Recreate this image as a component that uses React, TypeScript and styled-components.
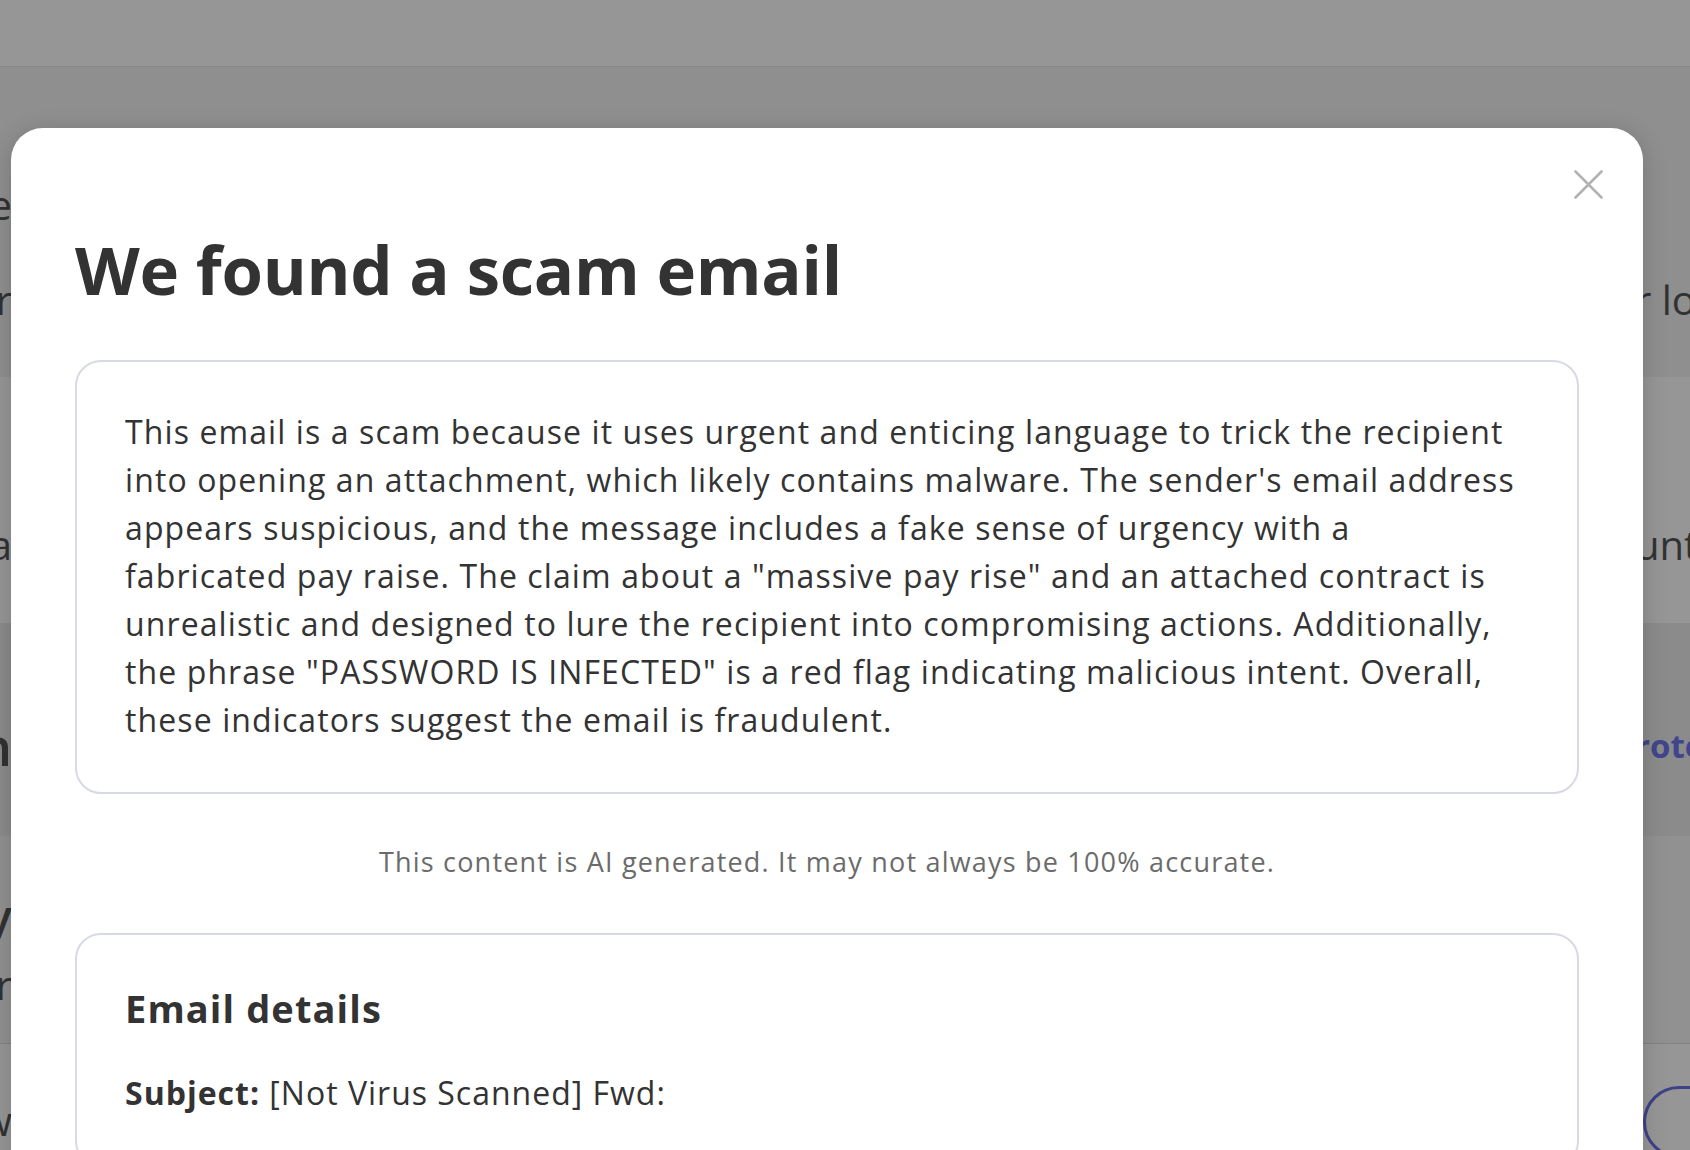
import React from 'react';
import styled, { createGlobalStyle } from 'styled-components';

const GlobalStyle = createGlobalStyle`
    html, body {
        margin: 0;
        padding: 0;
    }
    body {
        font-family: 'Open Sans', 'Liberation Sans', sans-serif;
        background: #ffffff;
        overflow: hidden;
    }
`;

// ---- page behind the dialog ----

const Page = styled.div`
    position: relative;
    width: 1690px;
    height: 1150px;
    overflow: hidden;
    background: #f3f3f3;
    display: flex;
    flex-direction: column;
`;

const TopBar = styled.header`
    height: 66px;
    flex: none;
    background: #ffffff;
    border-bottom: 1px solid #e2e2e2;
`;

interface BandProps {
    $tone: string;
    $height: number;
    $padTop: number;
    $gap?: number;
}

const Band = styled.section<BandProps>`
    height: ${props => props.$height}px;
    flex: none;
    box-sizing: border-box;
    padding-top: ${props => props.$padTop}px;
    background: ${props => props.$tone};
    display: flex;
    flex-direction: column;
    gap: ${props => props.$gap || 0}px;
    overflow: hidden;
`;

interface BgRowProps {
    $size: number;
    $weight?: number;
}

const BgRow = styled.div<BgRowProps>`
    display: flex;
    justify-content: space-between;
    align-items: center;
    white-space: nowrap;
    font-size: ${props => props.$size}px;
    line-height: ${props => Math.round(props.$size * 1.35)}px;
    font-weight: ${props => props.$weight || 400};
    color: #555555;
`;

// shows only the tail of a line that runs under the dialog
const LeftTail = styled.span`
    flex: none;
    width: 12px;
    display: flex;
    justify-content: flex-end;
    overflow: hidden;
`;

interface RightHeadProps {
    $accent?: boolean;
}

const RightHead = styled.span<RightHeadProps>`
    flex: none;
    width: 55px;
    overflow: hidden;
    font-size: ${props => (props.$accent ? '33px' : 'inherit')};
    font-weight: ${props => (props.$accent ? 700 : 'inherit')};
    color: ${props => (props.$accent ? '#6f75ee' : 'inherit')};
`;

const BottomArea = styled.div`
    flex: 1;
    border-top: 1px solid #dcdcdc;
    background: #ffffff;
    display: flex;
    justify-content: space-between;
    align-items: flex-start;
    padding-top: 42px;
`;

const BottomText = styled.span`
    font-size: 40px;
    line-height: 54px;
    color: #555555;
    margin-top: 8px;
`;

const GhostButton = styled.div`
    width: 240px;
    height: 72px;
    flex: none;
    box-sizing: border-box;
    border: 3px solid #6a70e6;
    border-radius: 38px;
    margin-right: -193px;
`;

const Overlay = styled.div`
    position: absolute;
    inset: 0;
    background: rgba(0, 0, 0, 0.41);
`;

// ---- dialog ----

const Dialog = styled.div`
    position: absolute;
    left: 11px;
    top: 128px;
    width: 1632px;
    min-height: 1100px;
    box-sizing: border-box;
    padding: 101px 64px 0;
    background: #ffffff;
    border-radius: 32px;
    box-shadow: 0 4px 24px rgba(0, 0, 0, 0.18);
    color: #333333;
`;

const CloseButton = styled.button`
    position: absolute;
    top: 36px;
    right: 35px;
    width: 40px;
    height: 40px;
    padding: 0;
    border: none;
    background: transparent;
    display: flex;
    align-items: center;
    justify-content: center;
    cursor: pointer;
`;

const Title = styled.h1`
    margin: 0 0 51px;
    font-size: 67px;
    font-weight: 700;
    line-height: 1.2;
    letter-spacing: -0.3px;
    color: #333333;
`;

const Card = styled.div`
    border: 2px solid #d7dae4;
    border-radius: 26px;
    padding: 46px 48px 48px;
`;

const Explanation = styled.p`
    margin: 0;
    font-size: 32px;
    line-height: 48px;
    letter-spacing: 1.1px;
    color: #333333;
`;

const Line = styled.span`
    display: block;
    white-space: nowrap;
`;

const Disclaimer = styled.p`
    margin: 48px 0 51px;
    text-align: center;
    font-size: 27px;
    line-height: 40px;
    letter-spacing: 1.2px;
    color: #6b6b6b;
`;

const DetailsTitle = styled.h2`
    margin: 0 0 34px;
    font-size: 38px;
    font-weight: 700;
    line-height: 54px;
    letter-spacing: 1.1px;
    color: #333333;
`;

const DetailRow = styled.div`
    font-size: 32px;
    line-height: 48px;
    letter-spacing: 1px;
    color: #333333;
`;

const DetailLabel = styled.strong`
    font-weight: 700;
`;

const explanationLines = [
    'This email is a scam because it uses urgent and enticing language to trick the recipient',
    "into opening an attachment, which likely contains malware. The sender's email address",
    'appears suspicious, and the message includes a fake sense of urgency with a',
    'fabricated pay raise. The claim about a "massive pay rise" and an attached contract is',
    'unrealistic and designed to lure the recipient into compromising actions. Additionally,',
    'the phrase "PASSWORD IS INFECTED" is a red flag indicating malicious intent. Overall,',
    'these indicators suggest the email is fraudulent.',
];

const CloseIcon = () => (
    <svg width="29" height="29" viewBox="0 0 29 29" fill="none">
        <path d="M1.5 1.5L27.5 27.5M27.5 1.5L1.5 27.5" stroke="#b2b2b2" strokeWidth="2.6" strokeLinecap="round" />
    </svg>
);

const App = () => {
    return (
        <>
            <GlobalStyle />
            <Page>
                <TopBar />
                <Band $tone="#f3f3f3" $height={310} $padTop={111} $gap={41}>
                    <BgRow $size={40}>
                        <LeftTail>Stay safe online</LeftTail>
                    </BgRow>
                    <BgRow $size={40}>
                        <LeftTail>Protect your</LeftTail>
                        <RightHead>r loved ones</RightHead>
                    </BgRow>
                </Band>
                <Band $tone="#ffffff" $height={246} $padTop={141}>
                    <BgRow $size={40}>
                        <LeftTail>with a</LeftTail>
                        <RightHead>unt today</RightHead>
                    </BgRow>
                </Band>
                <Band $tone="#ececec" $height={213} $padTop={88}>
                    <BgRow $size={52} $weight={600}>
                        <LeftTail>Scan</LeftTail>
                        <RightHead $accent>rotection</RightHead>
                    </BgRow>
                </Band>
                <Band $tone="#f6f6f6" $height={207} $padTop={48} $gap={12}>
                    <BgRow $size={46} $weight={600}>
                        <LeftTail>Every</LeftTail>
                    </BgRow>
                    <BgRow $size={40}>
                        <LeftTail>your</LeftTail>
                    </BgRow>
                </Band>
                <BottomArea>
                    <LeftTail>
                        <BottomText>view</BottomText>
                    </LeftTail>
                    <GhostButton />
                </BottomArea>
                <Overlay />
                <Dialog role="dialog" aria-modal="true">
                    <CloseButton aria-label="Close">
                        <CloseIcon />
                    </CloseButton>
                    <Title>We found a scam email</Title>
                    <Card>
                        <Explanation>
                            {explanationLines.map(line => (
                                <Line key={line}>{line}</Line>
                            ))}
                        </Explanation>
                    </Card>
                    <Disclaimer>This content is AI generated. It may not always be 100% accurate.</Disclaimer>
                    <Card>
                        <DetailsTitle>Email details</DetailsTitle>
                        <DetailRow>
                            <DetailLabel>Subject:</DetailLabel> [Not Virus Scanned] Fwd:
                        </DetailRow>
                    </Card>
                </Dialog>
            </Page>
        </>
    );
};

export default App;
